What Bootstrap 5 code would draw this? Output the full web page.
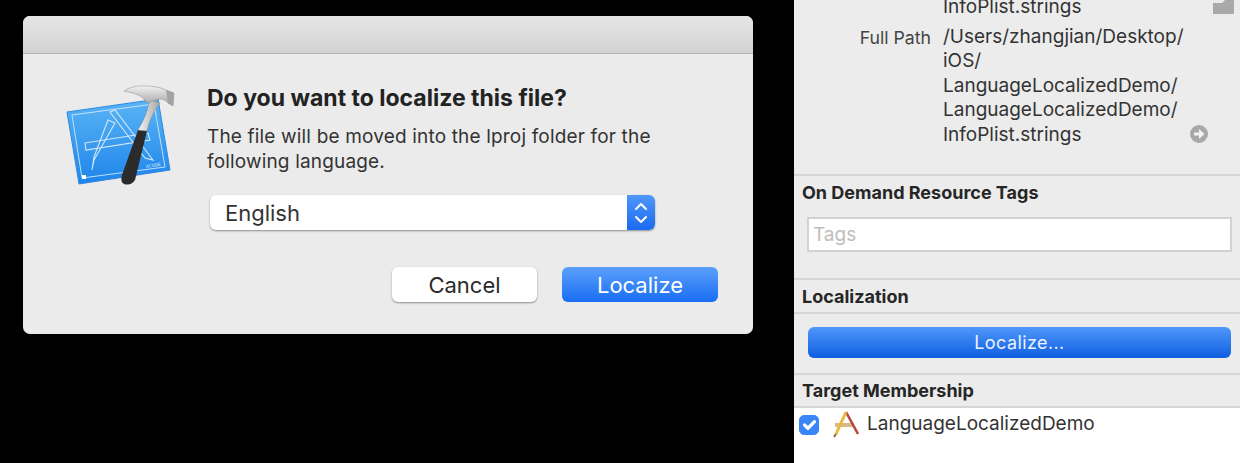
<!doctype html>
<html lang="en"><head><meta charset="utf-8"><title>Localize</title>
<link href="https://cdn.jsdelivr.net/npm/bootstrap@5.3.0/dist/css/bootstrap.min.css" rel="stylesheet">
<style>
html,body{height:463px;overflow:hidden}
body{background:#000;font-family:Inter,"Liberation Sans",sans-serif;color:#2a2a2a}
.stage{height:463px;padding-left:23px}
.dlg{width:730px;height:318px;margin-top:16px;background:#ebebeb;border-radius:7px;overflow:hidden;flex:none}
.dlg-bar{height:38px;background:linear-gradient(#e6e6e6,#d2d2d2);border-bottom:1px solid #b5b5b5}
.dlg-icon{width:184px;flex:none}
.dlg-icon svg{display:block;margin:26px 0 0 37px}
.dlg-main{width:546px;flex:none}
.dlg-title{font-size:23px;font-weight:700;line-height:28px;margin:30px 0 0;color:#222}
.dlg-text{font-size:19px;letter-spacing:.17px;line-height:24.5px;margin:13px 0 0;width:470px;color:#333}
.pick{width:445px;height:35px;margin:21px 0 0 3px;background:#fff;border-radius:6px;box-shadow:0 1px 2px rgba(0,0,0,.4);font-size:22px;color:#333}
.pick-name{padding-left:15px;padding-top:1px}
.pick-arrows{width:28px;height:100%;background:linear-gradient(#4f97fb,#1a6af0);border-radius:0 6px 6px 0}
.acts{margin:37px 0 0;width:511px}
.mac-btn{height:35px;font-size:22px;line-height:35px;padding:1px 0 0;border-radius:6px;border:0}
.mac-cancel{width:145px;background:#fff;color:#2b2b2b;box-shadow:0 1px 2px rgba(0,0,0,.4)}
.mac-ok{width:156px;margin-left:25px;background:linear-gradient(#5ba1fb,#1a6cf3);color:#fff}
.side{width:446px;height:463px;margin-left:41px;background:#ececec;flex:none;font-size:19px;overflow:hidden;color:#333}
.sec-top{height:176px;border-bottom:2px solid #d6d6d6;display:flow-root}
.lab{width:137px;text-align:right;color:#444;flex:none;font-size:17.7px}
.val{line-height:24.4px;margin-left:12px;width:243px;flex:none}
.first{margin-top:-5px;height:30px}
.stub{margin-left:27px;display:block}
.arrowdot{margin-left:4px;align-self:flex-end;margin-bottom:4px;display:block}
.sec-head{font-size:18px;font-weight:700;color:#262626;padding-left:8px}
.h1a{height:32px;line-height:34px}
.tags{width:425px;height:35px;margin:9px 0 0 13px;border:2px solid #d2d2d2;border-radius:0;font-size:19px;padding:0 4px;background:#fff}
.tags::placeholder{color:#bdbdbd}
.bline{height:2px;background:#d6d6d6}
.sec-tags{height:102px}
.sec-loc{height:32px;line-height:34px}
.sec-btn{height:59px;padding:13px 0 0 14px}
.wide-btn{width:423px;height:31px;line-height:29px;padding:0;font-size:18px;color:#eaf2ff;background:linear-gradient(#4f97fb,#0f5ee0);border:0;border-radius:6px;letter-spacing:.4px}
.sec-tm{height:31px;line-height:32px}
.sec-list{background:#fff;height:60px;padding:2px 0 0 5px;font-size:19px}
.tick,.tick:checked{width:20px;height:20px;margin:5px 0 0;background-color:#3b86f7;border-color:#3b86f7;border-radius:5px;background-size:22px}
.tm-row{height:32px}
.tm-ic{margin:0 6px 0 14px;flex:none}
</style></head>
<body>
<div class="stage d-flex align-items-start">
 <div class="dlg">
  <div class="dlg-bar"></div>
  <div class="d-flex">
   <div class="dlg-icon">
    <svg width="120" height="110" viewBox="60 80 120 110">
     <defs>
      <linearGradient id="bp" x1="0" y1="0" x2="0" y2="1"><stop offset="0" stop-color="#5ab5f5"/><stop offset="1" stop-color="#1e84ea"/></linearGradient>
      <linearGradient id="st" x1="0" y1="0" x2="0" y2="1"><stop offset="0" stop-color="#f2f2f2"/><stop offset="1" stop-color="#9f9f9f"/></linearGradient>
      <linearGradient id="nk" x1="0" y1="0" x2="1" y2="0"><stop offset="0" stop-color="#f4f4f4"/><stop offset="1" stop-color="#a5a5a5"/></linearGradient>
     </defs>
     <path d="M67 112 158 99 170 170 79 184Z" fill="url(#bp)" stroke="#2f8ae0" stroke-width="1"/>
     <path d="M72 115 154 104 165 167 82 178Z" fill="none" stroke="#cfe8fb" stroke-width=".9"/>
     <g fill="none" stroke="#cfe8fb" stroke-width="1.1">
      <path d="M85 143 148 133 150 140 86 150Z"/>
      <path d="M110 112 115 110 153 160 145 158Z"/>
      <path d="M108 120 115 123 94 160 92 170 94 157Z"/>
     </g>
     <path d="M82 175h4v4h-4z" fill="#fff"/>
     <text x="146" y="168" font-size="5" fill="#cfe8fb" font-family="Liberation Mono" transform="rotate(-8 146 168)">XCODE</text>
     <path d="M138 130 147 131 135 180Q131 186 124 184 120 182 122 175Z" fill="#2b2b2b"/>
     <path d="M138 130 147 131Q150 116 160 103L150 100Q147 116 138 130Z" fill="url(#nk)" stroke="#8a8a8a" stroke-width=".5"/>
     <path d="M124 91Q133 85 145 86 158 86 166 90L174 93 173 106 168 103Q163 97 156 100L147 103Q143 94 124 91Z" fill="url(#st)" stroke="#8a8a8a" stroke-width=".5"/>
     <path d="M166 90 174 93 173 106 168 103Z" fill="#a3a3a3"/>
    </svg>
   </div>
   <div class="dlg-main">
    <p class="dlg-title">Do you want to localize this file?</p>
    <p class="dlg-text">The file will be moved into the lproj folder for the following language.</p>
    <div class="pick d-flex align-items-center justify-content-between">
     <span class="pick-name">English</span>
     <span class="pick-arrows d-flex align-items-center justify-content-center">
      <svg width="16" height="26" viewBox="0 0 16 26" fill="none" stroke="#fff" stroke-width="2" stroke-linecap="round" stroke-linejoin="round"><path d="M3 9 8 4l5 5M3 17l5 5 5-5"/></svg>
     </span>
    </div>
    <div class="acts d-flex justify-content-end">
     <button class="btn mac-btn mac-cancel" type="button">Cancel</button>
     <button class="btn mac-btn mac-ok" type="button">Localize</button>
    </div>
   </div>
  </div>
 </div>
 <div class="side">
  <div class="sec-top">
   <div class="d-flex first">
    <div class="lab"></div>
    <div class="val">InfoPlist.strings</div>
    <svg class="stub" width="21" height="19" viewBox="0 0 21 19"><path d="M0 19V8H9L13 4V0H21V19Z" fill="#a9a9a9"/></svg>
   </div>
   <div class="d-flex">
    <div class="lab">Full Path</div>
    <div class="val">/Users/zhangjian/Desktop/<br>iOS/<br>LanguageLocalizedDemo/<br>LanguageLocalizedDemo/<br>InfoPlist.strings</div>
    <svg class="arrowdot" width="18" height="18" viewBox="0 0 18 18"><circle cx="9" cy="9" r="9" fill="#a8a8a8"/><path d="M4 7.5H9V4L14.5 9 9 14V10.5H4Z" fill="#f2f2f2"/></svg>
   </div>
  </div>
  <div class="sec-tags">
   <div class="sec-head h1a">On Demand Resource Tags</div>
   <input class="form-control tags" type="text" placeholder="Tags" aria-label="Tags">
  </div>
  <div class="bline"></div>
  <div class="sec-head sec-loc">Localization</div>
  <div class="bline"></div>
  <div class="sec-btn"><button class="btn wide-btn" type="button">Localize...</button></div>
  <div class="bline"></div>
  <div class="sec-head sec-tm">Target Membership</div>
  <div class="bline"></div>
  <div class="sec-list">
   <div class="d-flex align-items-start tm-row">
    <input class="form-check-input tick" type="checkbox" checked aria-label="LanguageLocalizedDemo">
    <svg class="tm-ic" width="28" height="28" viewBox="0 0 28 28" fill="none">
     <path d="M2 13H21V17H2Z" fill="#d9b98a"/>
     <path d="M13 2 25 24" stroke="#b5483a" stroke-width="2.6"/>
     <path d="M13 2 3 24" stroke="#e8b93a" stroke-width="3"/>
     <path d="M3 24 1 27" stroke="#8a6a3a" stroke-width="2"/>
    </svg>
    <span>LanguageLocalizedDemo</span>
   </div>
  </div>
 </div>
</div>
<script src="https://cdn.jsdelivr.net/npm/bootstrap@5.3.0/dist/js/bootstrap.bundle.min.js"></script>
</body></html>
